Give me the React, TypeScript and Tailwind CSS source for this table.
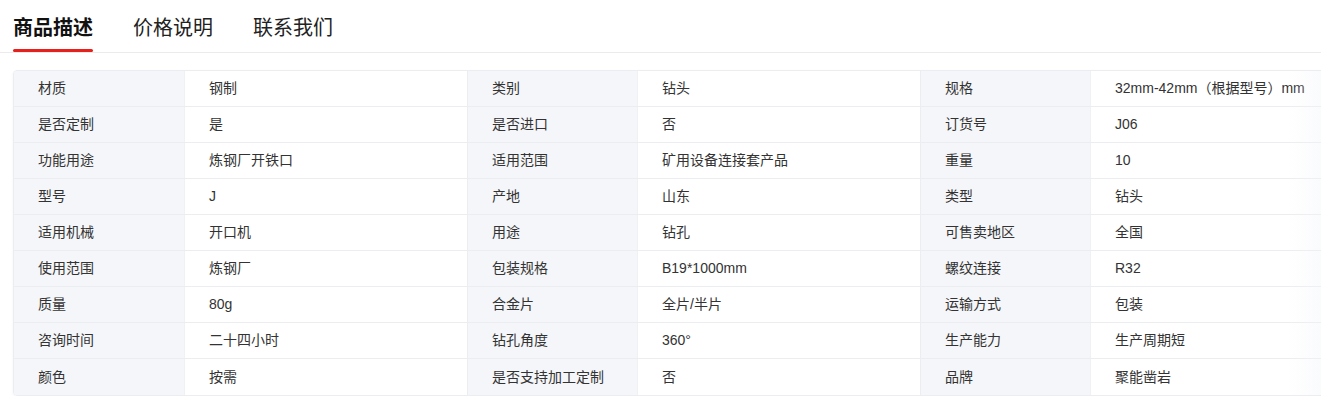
const rows: [string, string, string, string, string, string][] = [
  ["材质", "钢制", "类别", "钻头", "规格", "32mm-42mm（根据型号）mm"],
  ["是否定制", "是", "是否进口", "否", "订货号", "J06"],
  ["功能用途", "炼钢厂开铁口", "适用范围", "矿用设备连接套产品", "重量", "10"],
  ["型号", "J", "产地", "山东", "类型", "钻头"],
  ["适用机械", "开口机", "用途", "钻孔", "可售卖地区", "全国"],
  ["使用范围", "炼钢厂", "包装规格", "B19*1000mm", "螺纹连接", "R32"],
  ["质量", "80g", "合金片", "全片/半片", "运输方式", "包装"],
  ["咨询时间", "二十四小时", "钻孔角度", "360°", "生产能力", "生产周期短"],
  ["颜色", "按需", "是否支持加工定制", "否", "品牌", "聚能凿岩"],
];

const tabs = ["商品描述", "价格说明", "联系我们"];

export default function App() {
  return (
    <div
      className="h-[396px] w-[1321px] overflow-hidden bg-white text-[#333]"
      style={{ fontFamily: '"Liberation Sans", "Noto Sans CJK SC", sans-serif' }}
    >
      <div className="flex h-[53px] gap-10 border-b border-[#ebebeb] pl-[13px]">
        {tabs.map((t, i) => (
          <div key={t} className="relative flex flex-col pt-[14px]">
            <span
              className={
                i === 0
                  ? "text-[20px] leading-[28px] font-bold text-[#111]"
                  : "text-[20px] leading-[28px] text-[#222]"
              }
            >
              {t}
            </span>
            {i === 0 ? <div className="absolute bottom-0 left-0 h-[3px] w-full rounded-full bg-[#e8201c]" /> : null}
          </div>
        ))}
      </div>

      <div className="relative ml-[13px] mt-[17px] w-[1359px] overflow-hidden rounded-[4px] border border-[#ebedf0] shadow-[0_1px_3px_rgba(0,0,0,0.05)]">
        {rows.map((r, ri) => (
          <div
            key={ri}
            className={
              ri === rows.length - 1
                ? "grid h-[36px] grid-cols-[170px_283px_170px_283px_170px_283px] text-[14px]"
                : "grid h-[36px] grid-cols-[170px_283px_170px_283px_170px_283px] border-b border-[#ebedf0] text-[14px]"
            }
          >
            {r.map((c, ci) => (
              <div
                key={ci}
                className={
                  ci % 2 === 0
                    ? ci === 0
                      ? "flex items-center bg-[#f5f6f9] pl-6"
                      : "flex items-center border-l border-[#ebedf0] bg-[#f5f6f9] pl-6"
                    : "flex items-center border-l border-[#f0f1f4] bg-white pl-6"
                }
              >
                {c}
              </div>
            ))}
          </div>
        ))}
        <div className="pointer-events-none absolute top-0 bottom-0 left-[1275px] w-[40px] bg-gradient-to-r from-transparent to-[#f3f5fa]/50" />
      </div>
    </div>
  );
}
